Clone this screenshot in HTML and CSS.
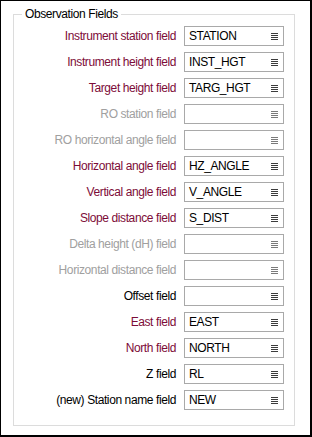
FILE: index.html
```html
<!DOCTYPE html>
<html lang="en">
<head>
    <meta charset="UTF-8">
    <title>Observation Fields</title>
    <link rel="stylesheet" href="styles.css">
</head>
<body>
    <div class="frame">
        <fieldset class="group">
            <legend>Observation Fields</legend>

            <div class="rows">
                <label class="req">Instrument station field</label>
                <div class="field"><span>STATION</span><i class="pick"></i></div>

                <label class="req">Instrument height field</label>
                <div class="field"><span>INST_HGT</span><i class="pick"></i></div>

                <label class="req">Target height field</label>
                <div class="field"><span>TARG_HGT</span><i class="pick"></i></div>

                <label class="off">RO station field</label>
                <div class="field"><span></span><i class="pick dim"></i></div>

                <label class="off">RO horizontal angle field</label>
                <div class="field"><span></span><i class="pick dim"></i></div>

                <label class="req">Horizontal angle field</label>
                <div class="field"><span>HZ_ANGLE</span><i class="pick"></i></div>

                <label class="req">Vertical angle field</label>
                <div class="field"><span>V_ANGLE</span><i class="pick"></i></div>

                <label class="req">Slope distance field</label>
                <div class="field"><span>S_DIST</span><i class="pick"></i></div>

                <label class="off">Delta height (dH) field</label>
                <div class="field"><span></span><i class="pick dim"></i></div>

                <label class="off">Horizontal distance field</label>
                <div class="field"><span></span><i class="pick dim"></i></div>

                <label>Offset field</label>
                <div class="field"><span></span><i class="pick"></i></div>

                <label class="req">East field</label>
                <div class="field"><span>EAST</span><i class="pick"></i></div>

                <label class="req">North field</label>
                <div class="field"><span>NORTH</span><i class="pick"></i></div>

                <label>Z field</label>
                <div class="field"><span>RL</span><i class="pick"></i></div>

                <label>(new) Station name field</label>
                <div class="field"><span>NEW</span><i class="pick"></i></div>
            </div>
        </fieldset>
    </div>
</body>
</html>
```

FILE: styles.css
```css
* {
    box-sizing: border-box;
    margin: 0;
    padding: 0;
}

body {
    background: #ffffff;
    font-family: 'Liberation Sans', Arial, sans-serif;
    font-size: 12px;
    letter-spacing: -0.4px;
    color: #000000;
}

.frame {
    width: 312px;
    height: 437px;
    border: 1px solid #000000;
    border-right-width: 2px;
    border-bottom-width: 2px;
    padding: 6px 0 0 12px;
}

.group {
    width: 282px;
    height: 419px;
    border: 1px solid #dcdcdc;
    padding: 4px 10px 0 0;
}

.group legend {
    margin-left: 8px;
    padding: 0 3px;
    line-height: 15px;
}

.rows {
    display: grid;
    grid-template-columns: 1fr 100px;
    grid-auto-rows: 20px;
    column-gap: 8px;
    row-gap: 6px;
}

.rows label {
    text-align: right;
    line-height: 20px;
    white-space: nowrap;
}

.rows label.req {
    color: #7d0c38;
}

.rows label.off {
    color: #a0a0a0;
}

.field {
    display: flex;
    align-items: center;
    border: 1px solid #a9a9a9;
    background: #ffffff;
    padding: 0 5px 0 4px;
}

.field span {
    flex: 1;
    line-height: 18px;
}

.pick {
    width: 7px;
    height: 7px;
    background: repeating-linear-gradient(to bottom, #3c3c3c 0 1px, transparent 1px 2px);
}

.pick.dim {
    background: repeating-linear-gradient(to bottom, #7a7a7a 0 1px, transparent 1px 2px);
}
```
